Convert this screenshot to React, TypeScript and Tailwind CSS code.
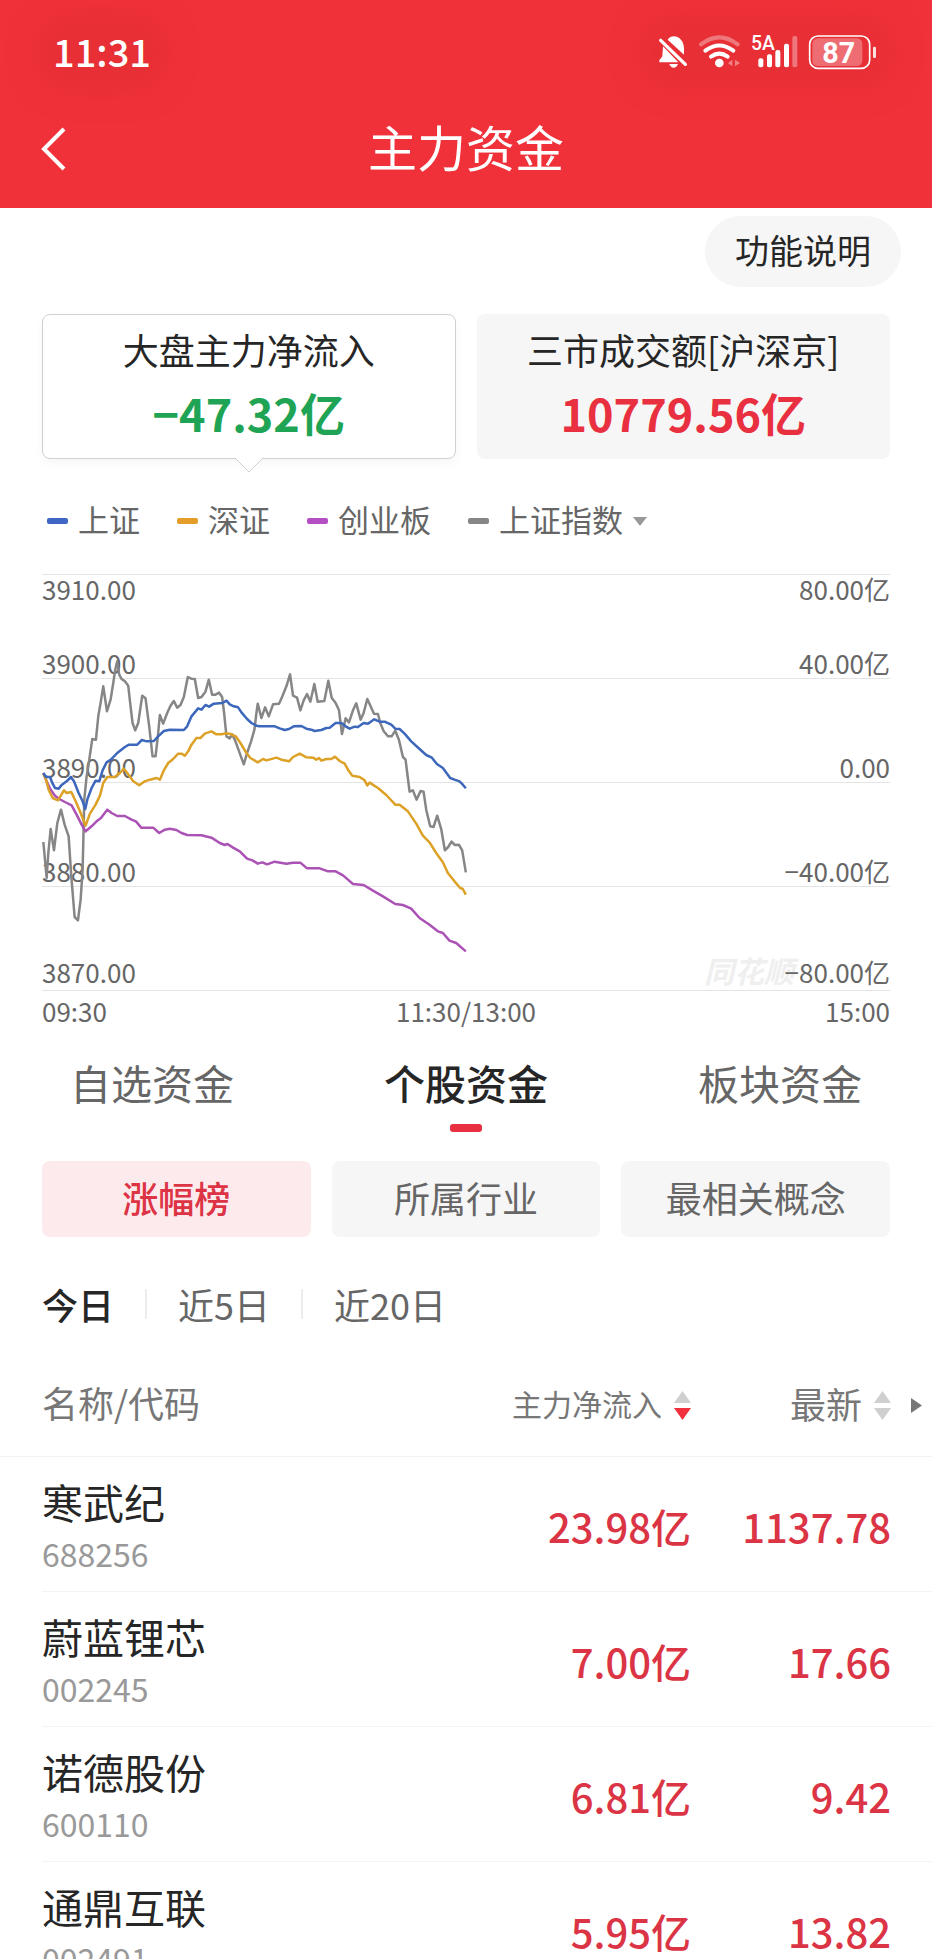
import React, { useState } from 'react';

interface Stock {
  name: string;
  code: string;
  inflow: string;
  price: string;
}

interface Series {
  name: string;
  color: string;
  points: string;
}

const stocks: Stock[] = [
  { name: '寒武纪', code: '688256', inflow: '23.98亿', price: '1137.78' },
  { name: '蔚蓝锂芯', code: '002245', inflow: '7.00亿', price: '17.66' },
  { name: '诺德股份', code: '600110', inflow: '6.81亿', price: '9.42' },
  { name: '通鼎互联', code: '002491', inflow: '5.95亿', price: '13.82' },
];

const series: Series[] = [
  {
    name: '上证指数',
    color: '#868686',
    points:
      '40,847 50,955 55,880 62,808 72,872 82,790 93,750 104,795 116,830 124,950 134,1072 144,1082 152,1020 158,930 163,720 170,650 178,600 187,538 198,540 205,470 212,430 220,380 226,420 231,455 242,420 250,370 256,330 262,305 268,345 275,358 285,365 295,378 302,440 308,490 316,512 325,490 337,408 347,416 358,500 368,590 377,590 384,530 390,466 400,492 412,460 422,438 432,424 442,444 452,436 462,412 474,352 484,357 495,358 505,415 515,412 527,396 537,360 547,405 557,405 568,399 577,412 583,460 590,530 600,536 607,524 615,540 628,575 642,614 652,580 664,545 674,510 680,460 684,432 695,475 706,443 717,470 730,434 748,432 758,410 770,380 781,344 790,408 802,414 812,452 822,422 832,403 842,426 854,373 864,426 884,424 896,363 906,414 918,430 928,452 937,523 948,476 958,488 970,452 980,431 993,480 1002,460 1013,418 1023,440 1033,462 1045,463 1052,490 1062,514 1075,530 1086,530 1097,513 1108,540 1120,592 1128,600 1133,640 1140,696 1150,692 1161,720 1173,694 1182,696 1190,750 1202,800 1212,802 1223,768 1235,808 1246,872 1256,862 1266,846 1276,856 1288,855 1298,872 1309,938',
  },
  {
    name: '创业板',
    color: '#ab52b5',
    points:
      '40,640 50,665 62,690 75,708 88,718 105,727 125,737 140,765 155,795 167,815 185,800 200,785 213,775 232,750 245,760 262,769 285,769 305,780 318,785 334,804 370,804 388,820 405,810 420,807 440,811 455,820 472,826 515,827 545,834 570,850 585,856 593,853 610,864 630,875 652,897 668,902 684,912 698,908 712,914 735,906 770,912 790,909 812,909 832,926 870,926 895,935 918,935 940,947 955,960 970,973 1002,976 1030,993 1060,1010 1097,1033 1120,1036 1145,1047 1170,1075 1200,1095 1225,1115 1240,1120 1260,1143 1280,1150 1309,1175',
  },
  {
    name: '深证',
    color: '#dca126',
    points:
      '40,640 48,660 56,690 68,715 84,722 102,692 110,700 124,697 135,720 150,755 167,798 180,762 197,735 210,708 220,670 232,652 255,652 270,640 282,627 292,640 310,665 328,677 345,665 360,660 380,655 390,660 402,632 415,610 430,598 445,582 455,582 465,588 475,575 485,555 500,535 512,535 525,522 545,515 560,524 575,524 590,521 602,523 618,530 632,550 650,580 662,595 684,608 700,598 710,602 740,594 755,600 778,605 790,592 810,582 830,593 850,594 860,600 868,595 875,603 890,598 905,598 916,591 930,604 945,612 955,630 968,648 990,652 1005,662 1013,677 1020,669 1045,685 1070,706 1097,735 1110,735 1135,755 1160,792 1180,828 1200,848 1220,880 1240,908 1255,940 1275,965 1292,985 1300,988 1309,1005',
  },
  {
    name: '上证',
    color: '#3d67bb',
    points:
      '40,640 48,652 60,652 68,672 75,685 86,687 96,675 110,665 123,652 132,665 146,700 158,725 166,748 172,720 185,685 197,663 208,665 218,632 230,608 243,600 262,580 285,562 297,555 322,555 336,541 350,545 372,544 385,530 402,514 420,510 462,511 472,500 485,470 505,446 515,450 527,436 538,441 552,432 578,430 590,423 600,434 612,440 625,443 635,458 652,478 665,490 680,498 690,500 713,500 735,500 750,506 765,511 778,508 792,500 815,499 830,507 845,510 855,514 875,511 890,505 900,504 918,490 935,490 948,500 960,507 975,501 985,502 1002,490 1015,492 1034,479 1050,486 1065,486 1085,495 1097,507 1110,508 1125,522 1145,545 1170,568 1190,586 1207,594 1222,613 1240,625 1262,655 1275,660 1290,665 1300,675 1309,686',
  },
];

// Each band ends on a grid line, with its labels sitting just above it
const bands = [
  { left: '3900.00', right: '40.00亿' },
  { left: '3890.00', right: '0.00' },
  { left: '3880.00', right: '−40.00亿' },
  { left: '3870.00', right: '−80.00亿' },
];

const tabs = ['自选资金', '个股资金', '板块资金'];
const rankings = ['涨幅榜', '所属行业', '最相关概念'];
const ranges = ['今日', '近5日', '近20日'];

const StatusBar: React.FC = () => (
  <div className="flex h-[104px] items-center justify-between pl-[53px] pr-[55px] text-white">
    <span className="rounded-full bg-[#e72f35] pb-[3px] text-[38px] font-medium leading-10 shadow-[0_0_28px_16px_#e72f35]">11:31</span>
    <div className="flex h-9 items-center gap-[10px] rounded-full bg-[#e72f35] shadow-[0_0_28px_16px_#e72f35]">
      {/* Muted bell */}
      <svg viewBox="570 105 96 108" className="h-9 w-8" fill="currentColor">
        <path d="M602 122C615 102 651 112 651 150V167Z" />
        <path d="M588 142L634 190H577V184L586 172Z" />
        <path d="M607 195H633Q629 206 620 206Q611 206 607 195Z" />
        <path d="M581 124L655 196" stroke="currentColor" strokeWidth="10" strokeLinecap="round" />
      </svg>
      {/* Wifi */}
      <svg viewBox="696 105 126 108" className="h-9 w-[42px]" fill="none" stroke="currentColor" strokeWidth="12" strokeLinecap="round">
        <path d="M702 136Q757 94 812 136" opacity="0.35" />
        <path d="M715 155Q757 124 799 155" />
        <path d="M732 173Q757 155 782 173" />
        <circle cx="757" cy="192" r="13" fill="currentColor" stroke="none" />
        <path d="M796 182V202L783 192ZM804 182V202L819 192Z" fill="currentColor" stroke="none" opacity="0.4" />
      </svg>
      {/* Signal */}
      <svg viewBox="852 105 141 108" className="h-9 w-[47px]" fill="currentColor">
        <text x="852" y="153" fontSize="58" fontWeight="500" fontFamily="Roboto, sans-serif">5A</text>
        <rect x="874" y="178" width="15" height="27" rx="6" />
        <rect x="900" y="166" width="15" height="39" rx="6" />
        <rect x="925" y="153" width="15" height="52" rx="6" />
        <rect x="951" y="134" width="15" height="71" rx="6" />
        <rect x="976" y="111" width="15" height="94" rx="6" opacity="0.35" />
      </svg>
      {/* Battery */}
      <svg viewBox="1026 105 207 108" className="h-9 w-[69px]" fill="currentColor">
        <rect x="1039" y="118" width="150" height="83" rx="16" opacity="0.3" />
        <rect x="1031" y="111" width="180" height="97" rx="25" fill="none" stroke="currentColor" strokeWidth="5" />
        <rect x="1221" y="143" width="9" height="34" rx="4" opacity="0.85" />
        <text x="1118" y="191" textAnchor="middle" fontSize="86" fontWeight="700" fontFamily="Roboto, sans-serif">87</text>
      </svg>
    </div>
  </div>
);

const SortIcon: React.FC<{ down?: boolean }> = ({ down }) => (
  <svg viewBox="0 0 17 29" className="h-[29px] w-[17px]">
    <path d="M8.5 0L17 12H0Z" fill="#cfcfcf" />
    <path d="M0 17H17L8.5 29Z" fill={down ? '#f0303c' : '#cfcfcf'} />
  </svg>
);

const FlowChart: React.FC = () => (
  <section className="mx-[42px] mt-[33px] text-[26px] leading-7 text-[#666]">
    <div className="relative border-b border-[#e4e4e4]">
      {bands.map((band, idx) => (
        <div
          key={band.left}
          className="flex h-[104px] flex-col justify-between border-t border-[#e4e4e4] pb-px last-of-type:pb-1"
        >
          <div className="flex justify-between">
            {idx === 0 && <span>3910.00</span>}
            {idx === 0 && <span>80.00亿</span>}
          </div>
          <div className="flex justify-between">
            <span>{band.left}</span>
            <span>{band.right}</span>
          </div>
        </div>
      ))}
      <svg viewBox="36 43 2547 1248" preserveAspectRatio="none" className="absolute inset-0 h-full w-full" fill="none">
        {series.map(line => (
          <polyline
            key={line.name}
            points={line.points}
            stroke={line.color}
            strokeWidth="2.5"
            strokeLinejoin="round"
            vectorEffect="non-scaling-stroke"
          />
        ))}
      </svg>
      <span className="absolute bottom-1 right-[96px] -z-10 text-[30px] font-bold italic leading-8 text-[#efefef]">同花顺</span>
    </div>
    <div className="mt-[6px] flex justify-between">
      <span className="flex-1">09:30</span>
      <span>11:30/13:00</span>
      <span className="flex-1 text-right">15:00</span>
    </div>
  </section>
);

const App: React.FC = () => {
  const [tab, setTab] = useState(1);
  const [ranking, setRanking] = useState(0);
  const [range, setRange] = useState(0);

  return (
    <div className="relative isolate h-screen overflow-hidden bg-white font-['Noto_Sans_CJK_SC',sans-serif] text-[#262626]">
      {/* Header */}
      <header className="bg-[#f03139] pb-[14px] text-white">
        <StatusBar />
        <div className="grid h-[90px] grid-cols-[1fr_auto_1fr] items-center px-[40px]">
          <button aria-label="返回" className="w-8">
            <svg viewBox="0 0 26 44" className="h-11 w-[26px]" fill="none" stroke="currentColor" strokeWidth="4">
              <path d="M24 2L4 22L24 42" />
            </svg>
          </button>
          <h1 className="pb-[6px] text-[49px] leading-[60px]">主力资金</h1>
        </div>
      </header>

      <div className="mt-2 flex justify-end pr-[31px]">
        <button className="h-[71px] rounded-full bg-[#f6f6f6] px-[30px] pb-1 text-[34px] leading-10">功能说明</button>
      </div>

      {/* Summary cards */}
      <section className="mx-[42px] mt-[27px] grid grid-cols-2 gap-[21px] text-center">
        <button className="relative flex h-[145px] flex-col items-center rounded-lg border border-[#d0d0d0] bg-white pt-[10px] shadow-[0_4px_10px_#0000000a]">
          <span className="text-[36px] leading-[48px]">大盘主力净流入</span>
          <span className="mt-3 text-[45px] font-bold leading-[56px] text-[#1fa455]">−47.32亿</span>
          <svg viewBox="0 0 30 16" className="absolute left-1/2 top-full -mt-px h-4 w-[30px] -translate-x-1/2">
            <path d="M0 0L15 15L30 0Z" fill="#fff" />
            <path d="M1 1L15 15L29 1" fill="none" stroke="#d0d0d0" />
          </svg>
        </button>
        <button className="flex h-[145px] flex-col items-center rounded-lg bg-[#f6f6f6] pt-[11px]">
          <span className="text-[36px] leading-[48px]">三市成交额[沪深京]</span>
          <span className="mt-3 text-[45px] font-bold leading-[56px] text-[#e93040]">10779.56亿</span>
        </button>
      </section>

      {/* Legend */}
      <div className="mx-[47px] mt-[42px] flex h-10 items-center gap-[37px] text-[31px] leading-9 text-[#666]">
        <span className="flex items-center gap-[10px]">
          <i className="h-[6px] w-[21px] rounded-[2px] bg-[#3f66c4]" />
          <span className="pb-1">上证</span>
        </span>
        <span className="flex items-center gap-[10px]">
          <i className="h-[6px] w-[21px] rounded-[2px] bg-[#e39d28]" />
          <span className="pb-1">深证</span>
        </span>
        <span className="flex items-center gap-[10px]">
          <i className="h-[6px] w-[21px] rounded-[2px] bg-[#b44fc3]" />
          <span className="pb-1">创业板</span>
        </span>
        <label className="flex items-center gap-[10px]">
          <i className="h-[6px] w-[21px] rounded-[2px] bg-[#868686]" />
          <select aria-label="指数" className="appearance-none bg-transparent pb-1">
            <option>上证指数</option>
          </select>
          <svg viewBox="0 0 14 9" className="h-[9px] w-[14px]">
            <path d="M0 0H14L7 9Z" fill="#999" />
          </svg>
        </label>
      </div>

      <FlowChart />

      {/* Tabs */}
      <nav className="mt-[27px] flex justify-between px-[70px]">
        {tabs.map((label, idx) => (
          <button
            key={label}
            onClick={() => setTab(idx)}
            className={`flex flex-col items-center text-[41px] leading-[60px] ${tab === idx ? 'font-medium text-[#262626]' : 'text-[#666]'}`}
          >
            {label}
            <span className={`mt-3 h-2 w-8 rounded-[3px] ${tab === idx ? 'bg-[#e93040]' : ''}`} />
          </button>
        ))}
      </nav>

      <div className="mx-[42px] mt-[29px] grid grid-cols-3 gap-[21px]">
        {rankings.map((label, idx) => (
          <button
            key={label}
            onClick={() => setRanking(idx)}
            className={`h-[76px] rounded-lg pb-1 text-[36px] leading-[48px] ${
              ranking === idx ? 'bg-[#fdeaec] font-medium text-[#dc3345]' : 'bg-[#f6f6f6] text-[#666]'
            }`}
          >
            {label}
          </button>
        ))}
      </div>

      <div className="mx-[42px] mt-[47px] flex h-10 items-center text-[36px] leading-10">
        {ranges.map((label, idx) => (
          <React.Fragment key={label}>
            {idx > 0 && <span className="mx-[31px] h-[30px] w-[2px] bg-[#ececec]" />}
            <button onClick={() => setRange(idx)} className={range === idx ? 'font-medium text-[#262626]' : 'text-[#666]'}>
              {label}
            </button>
          </React.Fragment>
        ))}
      </div>

      {/* Stock list */}
      <div className="mt-8 pl-[42px]">
        <table className="w-full table-fixed">
          <thead>
            <tr className="h-[100px] border-b border-[#f2f2f2] text-[#777]">
              <th className="relative pb-2 text-left text-[36px] font-normal before:absolute before:-bottom-px before:-left-[42px] before:h-px before:w-[42px] before:bg-[#f2f2f2]">
                名称/代码
              </th>
              <th className="w-[260px] font-normal">
                <button className="flex w-full items-center justify-end gap-3 text-[30px]">
                  <span className="pb-1">主力净流入</span>
                  <SortIcon down />
                </button>
              </th>
              <th className="w-[200px] font-normal">
                <button className="flex w-full items-center justify-end gap-3 text-[36px]">
                  <span className="pb-[6px]">最新</span>
                  <SortIcon />
                </button>
              </th>
              <th className="w-[41px] pl-[20px]">
                <button aria-label="更多" className="block">
                  <svg viewBox="0 0 11 15" className="h-[15px] w-[11px]">
                    <path d="M0 0L11 7.5L0 15Z" fill="#777" />
                  </svg>
                </button>
              </th>
            </tr>
          </thead>
          <tbody>
            {stocks.map(stock => (
              <tr key={stock.code} className="h-[135px] border-b border-[#f4f4f4] text-right text-[40px] font-medium text-[#db3445]">
                <td className="pb-[2px] text-left font-normal">
                  <div className="text-[41px] leading-[60px] text-[#262626]">{stock.name}</div>
                  <div className="text-[32px] leading-[44px] text-[#999]">{stock.code}</div>
                </td>
                <td className="pt-1">{stock.inflow}</td>
                <td className="pt-1">{stock.price}</td>
                <td />
              </tr>
            ))}
          </tbody>
        </table>
      </div>
    </div>
  );
};

export default App;
